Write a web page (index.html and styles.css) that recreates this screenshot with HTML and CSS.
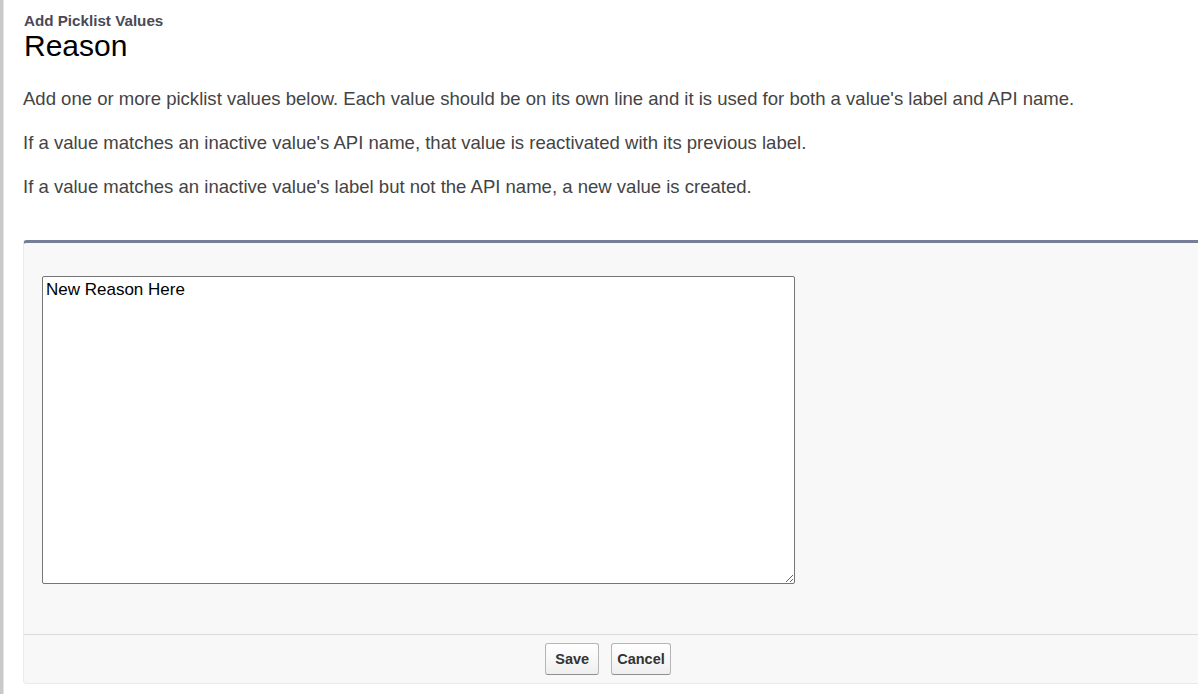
FILE: index.html
```html
<!DOCTYPE html>
<html>
<head>
<meta charset="utf-8">
<link rel="stylesheet" href="styles.css">
</head>
<body>
<div class="page">
  <div class="rail"></div>
  <main class="content">
    <div class="header">
      <div class="kicker">Add Picklist Values</div>
      <h1 class="title">Reason</h1>
    </div>
    <p class="info">Add one or more picklist values below. Each value should be on its own line and it is used for both a value's label and API name.</p>
    <p class="info">If a value matches an inactive value's API name, that value is reactivated with its previous label.</p>
    <p class="info">If a value matches an inactive value's label but not the API name, a new value is created.</p>
    <section class="panel">
      <div class="panel-body">
        <textarea class="values">New Reason Here</textarea>
      </div>
      <div class="panel-footer">
        <button class="btn">Save</button>
        <button class="btn">Cancel</button>
      </div>
    </section>
  </main>
</div>
</body>
</html>
```
FILE: styles.css
```css
html, body {
  margin: 0;
  padding: 0;
  background: #fff;
  height: 100%;
  overflow: hidden;
}
body {
  font-family: "Liberation Sans", Arial, sans-serif;
}
.page {
  display: flex;
  height: 694px;
}
.rail {
  width: 3px;
  flex: none;
  background: #c9c9c9;
  border-right: 1px solid #e4e4e4;
}
.content {
  flex: 1;
  padding: 12px 0 0 19px;
  min-width: 0;
}
.header {
  margin-bottom: 26px;
  padding-left: 1px;
}
.kicker {
  font-size: 15.2px;
  font-weight: bold;
  color: #4a4a56;
  line-height: 17px;
}
.title {
  margin: 0;
  font-weight: normal;
  font-size: 30px;
  line-height: 34px;
  color: #000;
}
.info {
  margin: 0 0 24px;
  font-size: 18.55px;
  line-height: 20px;
  color: #444;
}
.panel {
  margin-top: 43px;
  background: #f8f8f8;
  border-top: 3px solid #747e96;
  border-left: 1px solid #eaeaea;
  border-bottom: 1px solid #eaeaea;
  border-radius: 4px 0 0 4px;
}
.panel-body {
  padding: 33px 0 50px 18px;
}
.values {
  display: block;
  width: 753px;
  height: 308px;
  box-sizing: border-box;
  margin: 0;
  padding: 3px 3px;
  border: 1px solid #767676;
  border-radius: 2px;
  background: #fff;
  font-family: "Liberation Sans", Arial, sans-serif;
  font-size: 17px;
  line-height: 20px;
  color: #000;
  resize: both;
}
.panel-footer {
  border-top: 1px solid #dbdbdb;
  display: flex;
  justify-content: center;
  gap: 12px;
  padding: 8px 6px 8px 0;
}
.btn {
  height: 32px;
  min-width: 54px;
  padding: 0 5px;
  font-family: "Liberation Sans", Arial, sans-serif;
  font-size: 14.5px;
  font-weight: bold;
  color: #333;
  background: linear-gradient(#fff, #efefef);
  border: 1px solid #b5b5b5;
  border-bottom-color: #8f8f8f;
  border-radius: 3px;
}
```
